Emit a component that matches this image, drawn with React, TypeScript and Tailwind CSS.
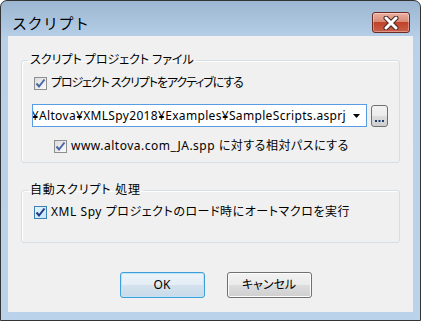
import React from 'react';

const font = "font-['Noto_Sans','Noto_Sans_CJK_JP',sans-serif] [font-feature-settings:'palt']";

const Check: React.FC<{ hot?: boolean }> = ({ hot }) => (
  <span
    className={
      hot
        ? 'flex h-[13px] w-[13px] shrink-0 items-center justify-center border border-[#3c7fb1] bg-gradient-to-br from-[#e5f4fc] to-[#c4e5f6]'
        : 'flex h-[13px] w-[13px] shrink-0 items-center justify-center border border-[#8e8f8f] bg-gradient-to-br from-[#dcdcdc] to-[#fbfbfb]'
    }
  >
    <svg width="11" height="11" viewBox="0 0 11 11">
      <path
        d="M1.5 5.5 L4 8.5 L9.5 1.5"
        fill="none"
        stroke={hot ? '#1f3a87' : '#4a66a8'}
        strokeWidth="2"
        strokeLinejoin="miter"
      />
    </svg>
  </span>
);

const Group: React.FC<{ label: string; labelClass?: string; className?: string; children: React.ReactNode }> = ({
  label,
  labelClass,
  className,
  children,
}) => (
  <fieldset
    className={
      'mx-[13px] rounded-[3px] border border-[#d5dfe5] shadow-[inset_1px_1px_0_#fff] ' + (className ?? '')
    }
  >
    <legend className={'ml-[6px] px-[2px] text-[12px] leading-[16px] ' + (labelClass ?? '')}>{label}</legend>
    {children}
  </fieldset>
);

const App: React.FC = () => {
  return (
    <div className={`${font} h-[321px] w-[421px] text-black`}>
      <div className="flex h-full w-full flex-col rounded-t-[7px] border border-[#343434] bg-gradient-to-b from-[#9cb6d1] via-[#b8d0e9] via-[12%] to-[#bad2ea]">
        {/* title bar */}
        <div className="flex h-[35px] shrink-0 items-center justify-between pl-[11px] pr-[10px] pt-[8px]">
          <span className="font-['Noto_Sans_CJK_JP',sans-serif] text-[15px] leading-[20px] tracking-[0.5px] [font-feature-settings:normal]">
            スクリプト
          </span>
          <div className="flex h-[21px] w-[38px] items-center justify-center rounded-[3px] border border-[#6b2a22] bg-[linear-gradient(#eab0a2,#d98b76_45%,#c1422b_50%,#cb5f47)] shadow-[inset_0_0_0_1px_rgba(255,255,255,0.35)]">
            <svg width="16" height="14" viewBox="0 0 16 14">
              <path d="M3 2 L13 12 M13 2 L3 12" stroke="#4a2420" strokeWidth="5" strokeLinecap="round" />
              <path d="M3 2 L13 12 M13 2 L3 12" stroke="#ffffff" strokeWidth="3" strokeLinecap="round" />
            </svg>
          </div>
        </div>

        {/* client area */}
        <div className="mx-[7px] flex h-[276px] flex-col bg-[#f0f0f0] pt-[16px]">
          <Group label="スクリプト プロジェクト ファイル" className="pb-[8px]">
            <div className="ml-[12px] mt-[7px] flex h-[16px] items-center gap-[4px] text-[12px] tracking-[-1.1px]">
              <Check />
              <span>プロジェクト スクリプトをアクティブにする</span>
            </div>
            <div className="ml-[10px] mt-[13px] flex items-center gap-[4px]">
              <div className="flex h-[23px] w-[335px] items-center border border-[#569de5] bg-white">
                <div className="flex min-w-0 flex-1 justify-end overflow-hidden whitespace-nowrap pr-[2px] text-[12px] tracking-[0.33px]">
                  <span>Documents¥Altova¥XMLSpy2018¥Examples¥SampleScripts.asprj</span>
                </div>
                <svg width="18" height="8" viewBox="0 0 18 8" className="shrink-0">
                  <path d="M5 2 L12 2 L8.5 6 Z" fill="#000" />
                </svg>
              </div>
              <div className="flex h-[22px] w-[17px] items-end justify-center rounded-[3px] border border-[#707070] bg-[linear-gradient(#f2f2f2,#ebebeb_50%,#dddddd_50%,#cfcfcf)] pb-[4px]">
                <svg width="9" height="2" viewBox="0 0 9 2">
                  <rect x="0" y="0" width="2" height="2" fill="#1b3d6f" />
                  <rect x="3.5" y="0" width="2" height="2" fill="#1b3d6f" />
                  <rect x="7" y="0" width="2" height="2" fill="#1b3d6f" />
                </svg>
              </div>
            </div>
            <div className="ml-[32px] mt-[11px] flex h-[16px] items-center gap-[4px] text-[12px] tracking-[0.5px]">
              <Check />
              <span>www.altova.com_JA.spp に対する相対パスにする</span>
            </div>
          </Group>

          <Group label="自動スクリプト 処理" labelClass="tracking-[0.8px]" className="mt-[19px] pb-[22px]">
            <div className="ml-[12px] mt-[6px] flex h-[16px] items-center gap-[4px] text-[12px] tracking-[0.55px]">
              <Check hot />
              <span>XML Spy プロジェクトのロード時にオートマクロを実行</span>
            </div>
          </Group>

          <div className="mt-[29px] flex justify-center gap-[22px] pl-[10px]">
            <button className="h-[26px] w-[85px] rounded-[3px] border border-[#3c9fd8] bg-[linear-gradient(#edf4f9,#e4edf5_50%,#d4e2ee_50%,#c9dae8)] text-[12px] shadow-[inset_0_0_0_1px_#bfe3f7]">
              OK
            </button>
            <button className="h-[26px] w-[85px] rounded-[3px] border border-[#707070] bg-[linear-gradient(#f2f2f2,#ebebeb_50%,#dddddd_50%,#cfcfcf)] text-[12px] shadow-[inset_0_0_0_1px_#fcfcfc]">
              キャンセル
            </button>
          </div>
        </div>
      </div>
    </div>
  );
};

export default App;
